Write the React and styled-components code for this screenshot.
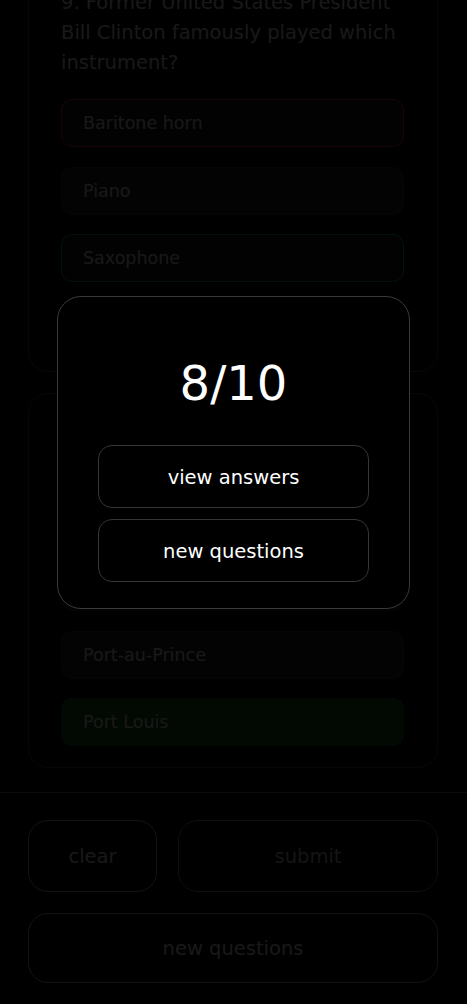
import React from 'react';
import styled, { createGlobalStyle, css } from 'styled-components';

const GlobalStyle = createGlobalStyle`
  * {
    box-sizing: border-box;
  }

  html, body {
    margin: 0;
    padding: 0;
    background: #000;
    color: #eee;
    font-family: 'DejaVu Sans', 'Noto Sans', sans-serif;
    overflow: hidden;
  }
`;

const StyledPage = styled.div`
  height: 100vh;
  display: flex;
  flex-direction: column;
  background: #000;
`;

const StyledMain = styled.main`
  flex: 1;
  overflow: hidden;
  padding: 0 29px 0 28px;
`;

const StyledList = styled.div`
  display: flex;
  flex-direction: column;
  gap: 21px;
  margin-top: -34px;
`;

const StyledCard = styled.section`
  border: 1px solid #4e4e4e;
  border-radius: 20px;
  padding: 21px 33px 21px 32px;
  display: flex;
  flex-direction: column;
  gap: 21px;
`;

const StyledQuestion = styled.h3`
  margin: 0;
  font-size: 19.5px;
  font-weight: 400;
  line-height: 30px;
  color: #eee;
`;

const StyledOptions = styled.div`
  display: flex;
  flex-direction: column;
  gap: 19.5px;
`;

const StyledOption = styled.div`
  height: 48px;
  display: flex;
  align-items: center;
  padding-left: 21px;
  border-radius: 11px;
  border: 1px solid #383838;
  background: #262626;
  font-size: 17.5px;
  color: #eee;

  ${({ state }) => state === 'wrong' && css`
    border-color: #ff1744;
    background: #1c1c1c;
  `}

  ${({ state }) => state === 'correct' && css`
    border-color: #10c040;
    background: #1c1c1c;
  `}

  ${({ state }) => state === 'chosen' && css`
    border-color: transparent;
    background: #1a5a1a;
  `}
`;

const StyledFooter = styled.footer`
  border-top: 1px solid #7a7a7a;
  padding: 27px 29px 21px 28px;
  display: flex;
  flex-direction: column;
  gap: 21px;
`;

const StyledRow = styled.div`
  display: grid;
  grid-template-columns: 129px 1fr;
  gap: 21px;
`;

const StyledFooterButton = styled.button`
  height: ${({ tall }) => (tall ? '72px' : '70px')};
  border-radius: 20px;
  border: 1px solid ${({ faded }) => (faded ? '#8a8a8a' : '#c4c4c4')};
  background: #000;
  font-family: inherit;
  font-size: 19.5px;
  color: ${({ faded }) => (faded ? '#c8c8c8' : '#f0f0f0')};
`;

const StyledOverlay = styled.div`
  position: fixed;
  inset: 0;
  background: rgba(0, 0, 0, 0.9);
  display: flex;
  justify-content: center;
  align-items: flex-start;
  padding-top: 296px;
`;

const StyledModal = styled.div`
  width: 353px;
  background: #000;
  border: 1px solid #3a3a3a;
  border-radius: 24px;
  padding: 57px 40px 26px;
  display: flex;
  flex-direction: column;
  align-items: center;
`;

const StyledScore = styled.div`
  font-size: 48px;
  line-height: 58px;
  color: #fff;
  margin-bottom: 33px;
`;

const StyledModalButton = styled.button`
  width: 271px;
  height: 63px;
  border-radius: 14px;
  border: 1px solid #363636;
  background: #000;
  font-family: inherit;
  font-size: 19.5px;
  color: #fff;
  padding-top: 3px;

  & + & {
    margin-top: 11px;
  }
`;

const questions = [
  {
    text: '9. Former United States President Bill Clinton famously played which instrument?',
    options: [
      { label: 'Baritone horn', state: 'wrong' },
      { label: 'Piano' },
      { label: 'Saxophone', state: 'correct' },
      { label: 'Trumpet' },
    ],
  },
  {
    text: '10. What is the capital of Mauritius?',
    options: [
      { label: 'Port Moresby' },
      { label: 'Port of Spain' },
      { label: 'Port-au-Prince' },
      { label: 'Port Louis', state: 'chosen' },
    ],
  },
];

const App = () => (
  <>
    <GlobalStyle />
    <StyledPage>
      <StyledMain>
        <StyledList>
          {questions.map((q) => (
            <StyledCard key={q.text}>
              <StyledQuestion>{q.text}</StyledQuestion>
              <StyledOptions>
                {q.options.map((o) => (
                  <StyledOption key={o.label} state={o.state}>
                    {o.label}
                  </StyledOption>
                ))}
              </StyledOptions>
            </StyledCard>
          ))}
        </StyledList>
      </StyledMain>
      <StyledFooter>
        <StyledRow>
          <StyledFooterButton tall>clear</StyledFooterButton>
          <StyledFooterButton tall faded>submit</StyledFooterButton>
        </StyledRow>
        <StyledFooterButton>new questions</StyledFooterButton>
      </StyledFooter>
    </StyledPage>
    <StyledOverlay>
      <StyledModal>
        <StyledScore>8/10</StyledScore>
        <StyledModalButton>view answers</StyledModalButton>
        <StyledModalButton>new questions</StyledModalButton>
      </StyledModal>
    </StyledOverlay>
  </>
);

export default App;
